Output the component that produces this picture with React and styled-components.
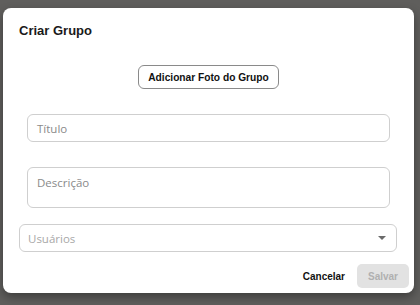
import React from "react";
import styled, { createGlobalStyle } from "styled-components";

const GlobalStyle = createGlobalStyle`
  html, body {
    margin: 0;
    padding: 0;
    background: #5f5e5c;
    font-family: "Liberation Sans", Arial, sans-serif;
  }
`;

const Page = styled.div`
  width: 420px;
  height: 305px;
  padding: 8px 6px 0 3px;
  box-sizing: border-box;
`;

const Dialog = styled.div`
  width: 411px;
  height: 285px;
  background: #ffffff;
  border-radius: 8px;
  box-shadow: 0 4px 10px rgba(0, 0, 0, 0.35);
  display: flex;
  flex-direction: column;
  box-sizing: border-box;
`;

const Title = styled.h2`
  margin: 0;
  padding: 12px 16px 0;
  font-size: 13px;
  line-height: 21px;
  font-weight: 700;
  color: #1a1a1a;
`;

const PhotoRow = styled.div`
  display: flex;
  justify-content: center;
  margin-top: 24px;
`;

const OutlineButton = styled.button`
  width: 141px;
  height: 24px;
  background: #ffffff;
  border: 1px solid #8a8a8a;
  border-radius: 6px;
  font-family: "Liberation Sans", Arial, sans-serif;
  font-size: 10.2px;
  font-weight: 700;
  color: #111;
  padding: 0;
`;

const Field = styled.div`
  margin: ${(p) => p.$top}px ${(p) => p.$side}px 0 ${(p) => p.$side}px;
  height: ${(p) => p.$height}px;
  border: 1px solid #cfcfcf;
  border-radius: 6px;
  box-sizing: border-box;
  display: flex;
  align-items: ${(p) => (p.$multi ? "flex-start" : "center")};
  padding: ${(p) => (p.$multi ? "7px" : "0")} 9px 0;
  font-family: "Open Sans", "Liberation Sans", sans-serif;
  font-size: 11.5px;
  color: #8a8a8a;
`;

const SelectField = styled(Field)`
  margin-right: 17px;
  padding-left: 8px;
  padding-right: 10px;
  justify-content: space-between;
  color: #a8a8a8;
`;

const Arrow = styled.span`
  width: 0;
  height: 0;
  border-left: 4px solid transparent;
  border-right: 4px solid transparent;
  border-top: 4px solid #6a6a6a;
`;

const Actions = styled.div`
  display: flex;
  justify-content: flex-end;
  align-items: center;
  gap: 12px;
  margin-top: 12px;
  padding-right: 5px;
`;

const TextButton = styled.button`
  background: none;
  border: none;
  padding: 0;
  font-family: "Liberation Sans", Arial, sans-serif;
  font-size: 10px;
  font-weight: 700;
  color: #111;
`;

const DisabledButton = styled.button`
  width: 52px;
  height: 24px;
  background: #e2e2e2;
  border: none;
  border-radius: 5px;
  font-family: "Liberation Sans", Arial, sans-serif;
  font-size: 10px;
  font-weight: 700;
  color: #b0b0b0;
`;

export default function App() {
  return (
    <Page>
      <GlobalStyle />
      <Dialog>
        <Title>Criar Grupo</Title>
        <PhotoRow>
          <OutlineButton>Adicionar Foto do Grupo</OutlineButton>
        </PhotoRow>
        <Field $top={25} $side={24} $height={28}>
          Título
        </Field>
        <Field $top={25} $side={24} $height={41} $multi>
          Descrição
        </Field>
        <SelectField $top={16} $side={16} $height={28}>
          Usuários
          <Arrow />
        </SelectField>
        <Actions>
          <TextButton>Cancelar</TextButton>
          <DisabledButton disabled>Salvar</DisabledButton>
        </Actions>
      </Dialog>
    </Page>
  );
}
